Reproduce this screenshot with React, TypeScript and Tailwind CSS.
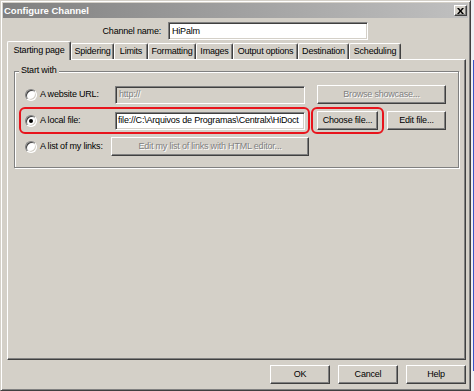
import React from "react";
import clsx from "clsx";

const raised =
	"border border-t-white border-l-white border-r-[#404040] border-b-[#404040] shadow-[inset_-1px_-1px_0_#808080]";
const sunken =
	"border border-t-[#808080] border-l-[#808080] border-r-white border-b-white shadow-[inset_1px_1px_0_#404040,inset_-1px_-1px_0_#d4d0c8]";
const grayText = "text-[#808080] [text-shadow:1px_1px_0_#ffffff]";

const Button = ({
	children,
	className,
	disabled,
}: {
	children: React.ReactNode;
	className?: string;
	disabled?: boolean;
}) => (
	<div
		className={clsx(
			"h-[19px] shrink-0 flex items-center justify-center whitespace-nowrap",
			raised,
			disabled ? grayText : "text-black",
			className,
		)}
	>
		{children}
	</div>
);

const Radio = ({ checked }: { checked?: boolean }) => (
	<span
		className={clsx(
			"w-[12px] h-[12px] shrink-0 rounded-full bg-white flex items-center justify-center",
			sunken,
		)}
	>
		{checked && <span className="w-[4px] h-[4px] rounded-full bg-black" />}
	</span>
);

const tabs = [
	{ label: "Spidering", w: "w-[43px]" },
	{ label: "Limits", w: "w-[34px]" },
	{ label: "Formatting", w: "w-[48px]" },
	{ label: "Images", w: "w-[37px]" },
	{ label: "Output options", w: "w-[65px]" },
	{ label: "Destination", w: "w-[51px]" },
	{ label: "Scheduling", w: "w-[52px]" },
];

export default function App() {
	return (
		<div className="w-[474px] h-[391px] bg-[#eef0f4] flex font-['Liberation_Sans',Arial,sans-serif] text-[9px] tracking-[-0.2px] leading-none text-black">
			{/* dialog window */}
			<div className="w-[471px] h-[391px] flex flex-col p-[2px] bg-[#d4d0c8] border border-t-[#d4d0c8] border-l-[#d4d0c8] border-r-[#404040] border-b-[#404040] shadow-[inset_1px_1px_0_#ffffff,inset_-1px_-1px_0_#808080]">
				{/* title bar */}
				<div className="h-[15px] flex items-center justify-between pl-[1px] pr-[1px] bg-[linear-gradient(to_right,#808080,#c0c0c0)]">
					<span className="text-white font-bold text-[9.5px] tracking-normal">
						Configure Channel
					</span>
					<div
						className={clsx(
							"w-[13px] h-[11px] bg-[#d4d0c8] flex items-center justify-center",
							raised,
						)}
					>
						<svg width="7" height="6" viewBox="0 0 7 6">
							<path
								d="M0 0h2l1.5 2L5 0h2L4.5 3L7 6H5L3.5 4L2 6H0l2.5-3z"
								fill="#000"
							/>
						</svg>
					</div>
				</div>

				{/* channel name */}
				<div className="mt-[4px] flex items-center">
					<span className="w-[158px] text-right">Channel name:</span>
					<div
						className={clsx(
							"ml-[7px] w-[200px] h-[18px] bg-white flex items-center pl-[3px]",
							sunken,
						)}
					>
						HiPalm
					</div>
				</div>

				{/* tabs */}
				<div className="mt-[1px] ml-[4px] h-[18px] flex items-end relative z-10">
					<div className="w-[64px] h-[19px] -mb-px bg-[#d4d0c8] rounded-t-[2px] border-t border-l border-r border-t-white border-l-white border-r-[#404040] shadow-[inset_-1px_0_0_#808080] flex items-center justify-center pb-[1px]">
						Starting page
					</div>
					{tabs.map((t) => (
						<div
							key={t.label}
							className={clsx(
								"h-[16px] rounded-t-[2px] border-t border-l border-r border-t-white border-l-white border-r-[#404040] shadow-[inset_-1px_0_0_#808080] flex items-center justify-center whitespace-nowrap",
								t.w,
							)}
						>
							{t.label}
						</div>
					))}
				</div>

				{/* tab panel */}
				<div
					className={clsx(
						"ml-[4px] w-[459px] h-[301px] bg-[#d4d0c8] flex flex-col",
						raised,
					)}
				>
					<div className="relative mt-[11px] mx-[6px] h-[97px] border border-[#808080] shadow-[1px_1px_0_#ffffff,inset_1px_1px_0_#ffffff] flex flex-col gap-[7px] pt-[13px]">
						<span className="absolute -top-[6px] left-[4px] px-[2px] bg-[#d4d0c8]">
							Start with
						</span>

						{/* website URL */}
						<div className="h-[19px] flex items-center pl-[10px]">
							<Radio />
							<span className="w-[78px] pl-[3px]">A website URL:</span>
							<div
								className={clsx(
									"w-[190px] h-[18px] bg-[#d4d0c8] flex items-center pl-[3px]",
									sunken,
									grayText,
								)}
							>
								http://
							</div>
							<Button disabled className="ml-[12px] w-[129px]">
								Browse showcase...
							</Button>
						</div>

						{/* local file */}
						<div className="relative h-[19px] flex items-center pl-[10px]">
							<Radio checked />
							<span className="w-[78px] pl-[3px]">A local file:</span>
							<div
								className={clsx(
									"w-[190px] h-[18px] bg-white flex items-center pl-[2px] overflow-hidden whitespace-nowrap",
									sunken,
								)}
							>
								file://C:\Arquivos de Programas\Centralx\HiDoct
							</div>
							<Button className="ml-[12px] w-[61px]">Choose file...</Button>
							<Button className="ml-[9px] w-[59px]">Edit file...</Button>
							<div className="absolute left-[4px] -top-[4px] w-[291px] h-[27px] rounded-[6px] border-2 border-[#e8141c]" />
							<div className="absolute left-[296px] -top-[4px] w-[73px] h-[27px] rounded-[6px] border-2 border-[#e8141c]" />
						</div>

						{/* list of links */}
						<div className="h-[19px] flex items-center pl-[10px]">
							<Radio />
							<span className="w-[74px] pl-[3px] whitespace-nowrap">
								A list of my links:
							</span>
							<Button disabled className="w-[198px]">
								Edit my list of links with HTML editor...
							</Button>
						</div>
					</div>
				</div>

				{/* dialog buttons */}
				<div className="mt-[5px] mr-[2px] flex justify-end gap-[8px]">
					<Button className="w-[60px]">OK</Button>
					<Button className="w-[60px]">Cancel</Button>
					<Button className="w-[60px]">Help</Button>
				</div>
			</div>
			<div className="flex-1 flex justify-end pt-[60px] pb-[20px]">
				<div className="w-px bg-[#3a56c8]" />
			</div>
		</div>
	);
}
